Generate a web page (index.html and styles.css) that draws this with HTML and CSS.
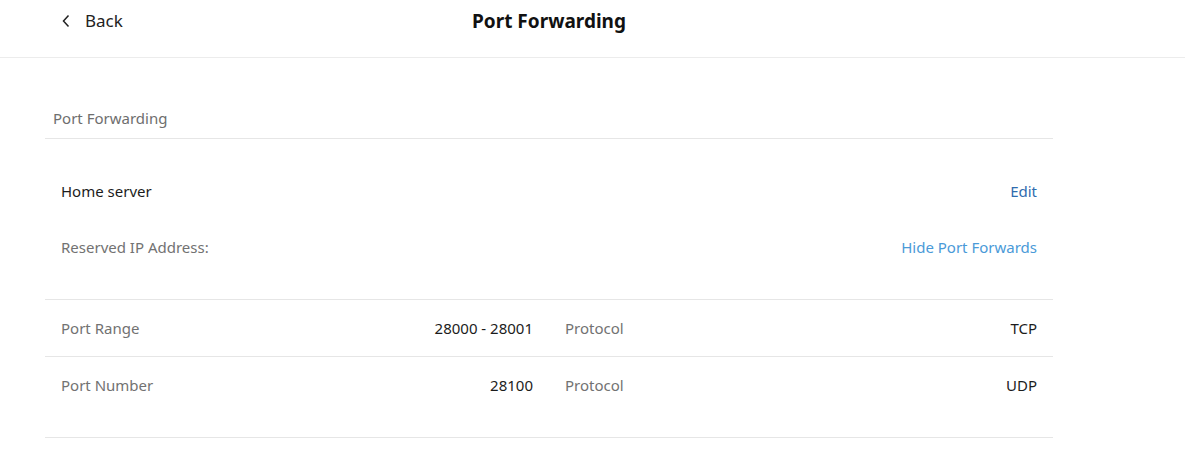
FILE: index.html
```html
<!DOCTYPE html>
<html>
<head>
  <title>Port Forwarding</title>
  <meta charset="UTF-8" />
  <meta name="viewport" content="width=device-width, initial-scale=1.0"/>
  <link rel="stylesheet" href="styles.css">
</head>
<body>
  <header class="topbar">
    <div class="topbar-inner">
      <a class="back" href="#">
        <svg width="10" height="16" viewBox="0 0 10 16"><path d="M7.5 2.5 L2.5 8 L7.5 13.5" fill="none" stroke="#222" stroke-width="1.5"/></svg>
        <span>Back</span>
      </a>
      <h1 class="title">Port Forwarding</h1>
      <div></div>
    </div>
  </header>

  <main class="content">
    <h2 class="section-title">Port Forwarding</h2>

    <div class="server">
      <div class="row">
        <span class="name">Home server</span>
        <a class="link" href="#">Edit</a>
      </div>
      <div class="row">
        <span class="label">Reserved IP Address:</span>
        <a class="link light" href="#">Hide Port Forwards</a>
      </div>
    </div>

    <div class="ports">
      <div class="port-row">
        <div class="cell"><span class="label">Port Range</span><span class="value">28000 - 28001</span></div>
        <div class="cell"><span class="label">Protocol</span><span class="value">TCP</span></div>
      </div>
      <div class="port-row">
        <div class="cell"><span class="label">Port Number</span><span class="value">28100</span></div>
        <div class="cell"><span class="label">Protocol</span><span class="value">UDP</span></div>
      </div>
    </div>
  </main>
</body>
</html>
```

FILE: styles.css
```css
body { margin: 0; font-family: "Noto Sans", "Open Sans", sans-serif; font-size: 15px; color: #1c1c1c; background: #fff; }
a { text-decoration: none; }

.topbar { height: 58px; border-bottom: 1px solid #ececec; box-sizing: border-box; }
.topbar-inner { width: 1008px; margin-left: 45px; padding-top: 6px; display: grid; grid-template-columns: 1fr auto 1fr; align-items: center; }
.back { justify-self: start; margin-left: 16px; display: flex; align-items: center; gap: 14px; color: #222; font-size: 17px; line-height: 30px; }
.title { margin: 0; font-size: 19px; font-weight: bold; color: #111; line-height: 30px; }

.content { width: 1008px; margin-left: 45px; }
.section-title { margin: 0; padding: 50px 8px 10px; font-size: 15px; font-weight: normal; color: #6e6e6e; line-height: 20px; border-bottom: 1px solid #e6e6e6; }

.server { padding: 24px 16px; border-bottom: 1px solid #e6e6e6; }
.row { height: 56px; display: flex; align-items: center; justify-content: space-between; line-height: 20px; }
.name { color: #1c1c1c; }
.label { color: #727272; }
.link { color: #2f6cae; }
.link.light { color: #4a9ad8; }

.ports { padding-bottom: 24px; border-bottom: 1px solid #e6e6e6; }
.port-row { height: 56px; padding: 0 16px; display: grid; grid-template-columns: 1fr 1fr; gap: 32px; align-items: center; line-height: 20px; }
.port-row + .port-row { border-top: 1px solid #e6e6e6; }
.cell { display: flex; justify-content: space-between; }
.value { color: #1c1c1c; }
```
